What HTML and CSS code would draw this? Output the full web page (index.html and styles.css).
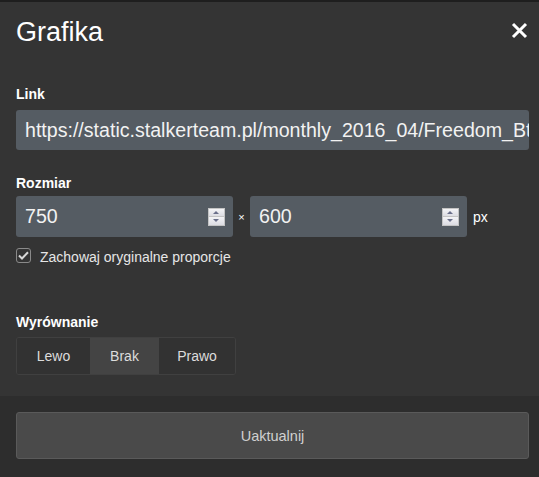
FILE: index.html
```html
<!DOCTYPE html>
<html>
<head>
<meta charset="utf-8">
<link rel="stylesheet" href="styles.css">
</head>
<body>
<div class="dialog">
  <div class="topline"></div>
  <div class="header">
    <h1 class="title">Grafika</h1>
    <svg class="close" width="17" height="17" viewBox="0 0 17 17"><path d="M2 2 L15 15 M15 2 L2 15" stroke="#ffffff" stroke-width="3" fill="none"/></svg>
  </div>
  <div class="body">
    <div class="field">
      <label class="label">Link</label>
      <div class="input link">https://static.stalkerteam.pl/monthly_2016_04/Freedom_Bt</div>
    </div>
    <div class="field size">
      <label class="label">Rozmiar</label>
      <div class="size-row">
        <div class="input num"><span>750</span><span class="spin"><i class="up"></i><i class="down"></i></span></div>
        <span class="times">×</span>
        <div class="input num"><span>600</span><span class="spin"><i class="up"></i><i class="down"></i></span></div>
        <span class="px">px</span>
      </div>
      <div class="check-row">
        <span class="checkbox"><svg width="11" height="9" viewBox="0 0 11 9"><path d="M1 4.5 L4 7.5 L10 1.2" fill="none" stroke="#d8d8d8" stroke-width="2"/></svg></span>
        <span class="check-text">Zachowaj oryginalne proporcje</span>
      </div>
    </div>
    <div class="field align">
      <label class="label">Wyrównanie</label>
      <div class="seg">
        <span class="seg-btn w1">Lewo</span>
        <span class="seg-btn w2 active">Brak</span>
        <span class="seg-btn w3">Prawo</span>
      </div>
    </div>
  </div>
  <div class="footer">
    <div class="submit">Uaktualnij</div>
  </div>
</div>
</body>
</html>
```
FILE: styles.css
```css
html, body {
  margin: 0;
  padding: 0;
  background: #343434;
  font-family: Arial, "Liberation Sans", sans-serif;
}
.dialog {
  width: 539px;
  height: 477px;
  background: #343434;
  display: flex;
  flex-direction: column;
  overflow: hidden;
}
.topline {
  height: 2px;
  background: #1e1e1e;
}
.header {
  display: flex;
  justify-content: space-between;
  align-items: flex-start;
  padding: 14px 11px 0 16px;
  height: 56px;
}
.title {
  margin: 0;
  font-weight: normal;
  font-size: 27px;
  color: #ffffff;
  line-height: 32px;
}
.close {
  margin-top: 6px;
}
.body {
  padding: 0 10px 0 16px;
  flex: 1;
}
.field { display: flex; flex-direction: column; }
.label {
  color: #ffffff;
  font-weight: bold;
  font-size: 14px;
  line-height: 16px;
  margin-top: 14px;
  margin-bottom: 8px;
}
.input {
  background: #555c63;
  border-radius: 3px;
  color: #f2f2f2;
  font-size: 19.6px;
  box-sizing: border-box;
}
.link {
  height: 40px;
  line-height: 40px;
  padding: 0 10px 0 9px;
  white-space: nowrap;
  overflow: hidden;
  width: 513px;
}
.size { margin-top: 11px; }
.size .label { margin-bottom: 5px; }
.size-row {
  display: flex;
  align-items: center;
}
.num {
  width: 217px;
  height: 41px;
  display: flex;
  align-items: center;
  justify-content: space-between;
  padding: 0 8px 0 9px;
}
.spin {
  width: 15px;
  height: 16px;
  border: 1px solid #c4c4c4;
  background: #e8e8ee;
  display: flex;
  flex-direction: column;
  box-sizing: content-box;
}
.spin i {
  flex: 1;
  position: relative;
  display: block;
  background: linear-gradient(#f4f4f6, #dcdce2);
}
.spin i.up { border-bottom: 1px solid #c4c4c4; }
.spin i::after {
  content: "";
  position: absolute;
  left: 4px;
  top: 2px;
  border-left: 3.5px solid transparent;
  border-right: 3.5px solid transparent;
}
.spin i.up::after { border-bottom: 3px solid #6a6f8a; }
.spin i.down::after { border-top: 3px solid #6a6f8a; top: 2px; }
.times {
  color: #ffffff;
  font-size: 11px;
  width: 17px;
  text-align: center;
}
.px {
  color: #ffffff;
  font-size: 14px;
  margin-left: 6px;
}
.check-row {
  display: flex;
  align-items: center;
  margin-top: 9px;
}
.checkbox {
  width: 13px;
  height: 13px;
  border: 1px solid #8a8a8a;
  border-radius: 3px;
  display: flex;
  align-items: center;
  justify-content: center;
}
.check-text {
  color: #e6e6e6;
  font-size: 14px;
  margin-left: 9px;
  margin-top: 3px;
}
.align { margin-top: 35px; }
.align .label { margin-bottom: 7px; }
.seg {
  display: flex;
  width: 220px;
  height: 38px;
  border: 1px solid #404040;
  border-radius: 3px;
  box-sizing: border-box;
  overflow: hidden;
}
.seg-btn {
  display: flex;
  align-items: center;
  justify-content: center;
  color: #dcdcdc;
  font-size: 14px;
  background: #323232;
}
.w1 { width: 73px; }
.w2 { width: 69px; }
.w3 { flex: 1; }
.seg-btn.active { background: #444444; }
.footer {
  background: #2d2d2d;
  height: 81px;
  padding: 16px 10px 0 16px;
  box-sizing: border-box;
}
.submit {
  height: 47px;
  background: #4a4a4a;
  border: 1px solid #5a5a5a;
  border-radius: 3px;
  box-sizing: border-box;
  display: flex;
  align-items: center;
  justify-content: center;
  color: #d0d0d0;
  font-size: 14.5px;
}
```
